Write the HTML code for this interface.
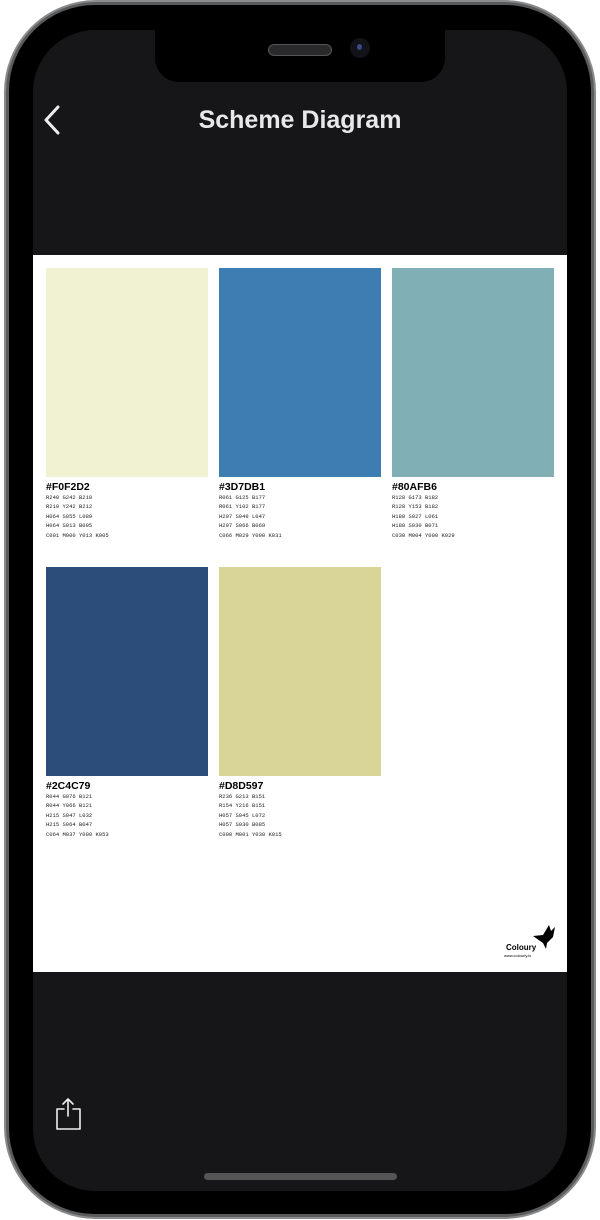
<!DOCTYPE html>
<html><head><style>
*{margin:0;padding:0;box-sizing:border-box}
body{width:600px;height:1220px;background:#fff;position:relative;overflow:hidden;font-family:"Liberation Sans",sans-serif}
.frame{position:absolute;left:4px;top:0;width:592px;height:1219px;border-radius:92px;background:#5a5b5c;border:2px solid #8a8b8c}
.bez{position:absolute;left:9px;top:5px;width:582px;height:1209px;border-radius:86px;background:#000}
.scr{position:absolute;left:33px;top:30px;width:534px;height:1161px;border-radius:62px;background:#161518;overflow:hidden}
.notch{position:absolute;left:155px;top:30px;width:290px;height:52px;background:#000;border-radius:0 0 24px 24px}
.spk{position:absolute;left:268px;top:44px;width:64px;height:12px;border-radius:6px;background:#2a2a2c;border:1px solid #555}
.cam{position:absolute;left:350px;top:38px;width:20px;height:20px;border-radius:50%;background:#121218}
.cam:after{content:"";position:absolute;left:7px;top:6px;width:5px;height:6px;border-radius:50%;background:#3a4a8a}
.title{position:absolute;left:0;width:600px;top:106px;text-align:center;color:#e8e8ea;font-size:25px;font-weight:bold}
.card{position:absolute;left:33px;top:255px;width:534px;height:717px;background:#fff}
.sw{position:absolute;width:162px;height:209px}
.lab{position:absolute;font-weight:bold;font-size:10.5px;color:#000}
.val{position:absolute;font-family:"Liberation Mono",monospace;font-size:5.5px;line-height:9.4px;color:#222}
.home{position:absolute;left:204px;top:1173px;width:193px;height:7px;border-radius:4px;background:#555}
</style></head><body>
<div class="frame"></div><div class="bez"></div>
<div class="scr"></div>
<div class="notch"></div><div class="spk"></div><div class="cam"></div>
<svg style="position:absolute;left:40px;top:104px" width="24" height="32"><path d="M18 3 L6 16 L18 29" fill="none" stroke="#eee" stroke-width="3" stroke-linecap="round" stroke-linejoin="round"/></svg>
<div class="title">Scheme Diagram</div>
<div class="card">
<div class="sw" style="left:13px;top:13px;background:#F0F2D2"></div>
<div class="sw" style="left:186px;top:13px;background:#3D7DB1"></div>
<div class="sw" style="left:359px;top:13px;background:#80AFB6"></div>
<div class="sw" style="left:13px;top:312px;background:#2C4C79"></div>
<div class="sw" style="left:186px;top:312px;background:#D8D597"></div>
<div class="lab" style="left:13px;top:226px">#F0F2D2</div>
<div class="val" style="left:13px;top:238px">R240 G242 B210<br>R210 Y242 B212<br>H064 S055 L089<br>H064 S013 B095<br>C001 M000 Y013 K005</div>
<div class="lab" style="left:186px;top:226px">#3D7DB1</div>
<div class="val" style="left:186px;top:238px">R061 G125 B177<br>R061 Y102 B177<br>H207 S049 L047<br>H207 S066 B069<br>C066 M029 Y000 K031</div>
<div class="lab" style="left:359px;top:226px">#80AFB6</div>
<div class="val" style="left:359px;top:238px">R128 G173 B182<br>R128 Y153 B182<br>H188 S027 L061<br>H188 S030 B071<br>C030 M004 Y000 K029</div>
<div class="lab" style="left:13px;top:525px">#2C4C79</div>
<div class="val" style="left:13px;top:537px">R044 G076 B121<br>R044 Y066 B121<br>H215 S047 L032<br>H215 S064 B047<br>C064 M037 Y000 K053</div>
<div class="lab" style="left:186px;top:525px">#D8D597</div>
<div class="val" style="left:186px;top:537px">R236 G213 B151<br>R154 Y216 B151<br>H057 S045 L072<br>H057 S030 B085<br>C000 M001 Y030 K015</div>
<svg style="position:absolute;left:496px;top:666px" width="30" height="30"><path d="M4 15 L14 14 L20 4 L22 10 L26 6 L24 16 L18 22 L17 28 L14 22 Z" fill="#000"/></svg>
<div style="position:absolute;left:473px;top:688px;font-size:8px;font-weight:bold">Coloury</div>
<div style="position:absolute;left:471px;top:698px;font-size:4px">www.colourly.io</div>
</div>
<svg style="position:absolute;left:54px;top:1096px" width="30" height="36"><path d="M14 3 V20 M9 8 L14 3 L19 8 M10 13 H3 V33 H26 V13 H19" fill="none" stroke="#eee" stroke-width="1.6" stroke-linejoin="round" stroke-linecap="round"/></svg>
<div class="home"></div>
</body></html>
